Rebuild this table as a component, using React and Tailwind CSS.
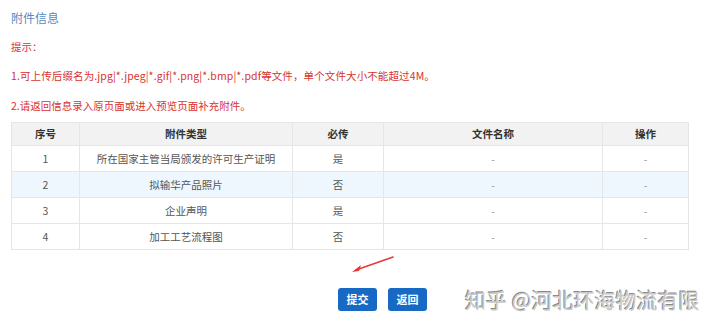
const rows = [
  { no: 1, type: "所在国家主管当局颁发的许可生产证明", must: "是" },
  { no: 2, type: "拟输华产品照片", must: "否" },
  { no: 3, type: "企业声明", must: "是" },
  { no: 4, type: "加工工艺流程图", must: "否" },
];

const font = "font-['Noto_Sans_CJK_SC','Noto_Sans',sans-serif]";

export default function App() {
  return (
    <div className={`relative w-[720px] h-[327px] bg-white overflow-hidden ${font}`}>
      <div className="flex flex-col pl-[11px]">
        {/* 标题 */}
        <div className="mt-[8px] leading-[20px] text-[12px] text-[#5a87c0]">附件信息</div>
        <div className="mt-[9px] leading-[20px] text-[10.5px] text-[#d8322f]">提示：</div>
        <div className="mt-[9px] leading-[20px] text-[10.5px] text-[#d8322f] tracking-[0.11px]">
          1.可上传后缀名为.jpg|*.jpeg|*.gif|*.png|*.bmp|*.pdf等文件，单个文件大小不能超过4M。
        </div>
        <div className="mt-[10px] leading-[20px] text-[10.5px] text-[#d8322f]">
          2.请返回信息录入原页面或进入预览页面补充附件。
        </div>

        {/* 附件表格 */}
        <table className="mt-[6px] w-[677px] border-collapse text-[10.5px] table-fixed">
          <colgroup>
            <col className="w-[68px]" />
            <col className="w-[213px]" />
            <col className="w-[91px]" />
            <col className="w-[219px]" />
            <col className="w-[86px]" />
          </colgroup>
          <thead>
            <tr className="h-[23px] bg-[#f2f2f2] text-[#333]">
              {["序号", "附件类型", "必传", "文件名称", "操作"].map((h) => (
                <th key={h} className="border border-[#e6e6e6] font-bold text-center p-0">
                  {h}
                </th>
              ))}
            </tr>
          </thead>
          <tbody>
            {rows.map((r) => (
              <tr
                key={r.no}
                className={`h-[26px] text-[#555] ${r.no === 2 ? "bg-[#eef7fd]" : "bg-white"}`}
              >
                <td className="border border-[#e6e6e6] text-center p-0">{r.no}</td>
                <td className="border border-[#e6e6e6] text-center p-0">{r.type}</td>
                <td className="border border-[#e6e6e6] text-center p-0">{r.must}</td>
                <td className="border border-[#e6e6e6] text-center p-0 text-[#999]">-</td>
                <td className="border border-[#e6e6e6] text-center p-0 text-[#999]">-</td>
              </tr>
            ))}
          </tbody>
        </table>

        {/* 按钮 */}
        <div className="mt-[38px] flex gap-[11px] pl-[327px]">
          <button className="w-[39px] h-[23px] rounded-[3px] bg-[#1769c4] text-white text-[11px] font-bold leading-none">
            提交
          </button>
          <button className="w-[39px] h-[23px] rounded-[3px] bg-[#1769c4] text-white text-[11px] font-bold leading-none">
            返回
          </button>
        </div>
      </div>

      {/* 红色箭头 */}
      <svg className="absolute left-[348px] top-[254px]" width="50" height="22" viewBox="0 0 50 22">
        <path d="M45 3 L8 16" stroke="#e53935" strokeWidth="1.6" strokeLinecap="round" />
        <path d="M4 18 L13 11 L11 17 Z" fill="#e53935" />
      </svg>

      {/* 水印 */}
      <div className="absolute left-[465px] top-[285px] text-[21px] leading-[28px] whitespace-nowrap text-[#c8c8c8] [text-shadow:1px_1px_0_#fff,-1px_-1px_0_#8a8a8a]">
        知乎 @河北环海物流有限
      </div>
    </div>
  );
}
